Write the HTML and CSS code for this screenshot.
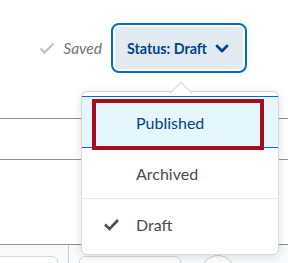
FILE: index.html
```html
<!DOCTYPE html>
<html lang="en">
<head>
  <meta charset="UTF-8">
  <title>Status</title>
  <link rel="stylesheet" href="styles.css">
</head>
<body>
  <header class="topbar">
    <span class="saved">
      <svg width="16" height="12" viewBox="0 0 16 12"><path d="M1.5 6.5 L5.5 10.5 L14.5 1.5" fill="none" stroke="#b8bfc4" stroke-width="2"/></svg>
      <span>Saved</span>
    </span>
    <button class="status-btn">
      <span>Status: Draft</span>
      <svg width="14" height="9" viewBox="0 0 14 9"><path d="M2 2 L7 7 L12 2" fill="none" stroke="#004489" stroke-width="2.8" stroke-linecap="round" stroke-linejoin="round"/></svg>
    </button>
  </header>

  <main class="content">
    <div class="field-row"></div>
    <div class="field-row tall"></div>
    <div class="tray">
      <div class="tray-box first"></div>
      <div class="tray-sep"></div>
      <div class="tray-box second"></div>
      <div class="tray-circle"></div>
    </div>
  </main>

  <div class="menu">
    <div class="menu-arrow"></div>
    <ul class="menu-list">
      <li class="menu-item active"><span class="slot"></span>Published</li>
      <li class="menu-item"><span class="slot"></span>Archived</li>
      <li class="menu-item"><span class="slot">
        <svg width="17" height="13" viewBox="0 0 17 13"><path d="M2 6.5 L6.5 11 L15 2" fill="none" stroke="#494c4e" stroke-width="2.6"/></svg>
      </span>Draft</li>
    </ul>
  </div>

  <div class="highlight"></div>
</body>
</html>
```

FILE: styles.css
```css
html {
  overflow: hidden;
}

body {
  margin: 0;
  background-color: #ffffff;
  font-family: Lato, 'Noto Sans', sans-serif;
  color: #494c4e;
  width: 288px;
  height: 263px;
  overflow: hidden;
}

.topbar {
  display: flex;
  justify-content: flex-end;
  align-items: center;
  padding: 23px 41px 0 0;
  height: 50px;
}

.saved {
  display: flex;
  align-items: center;
  gap: 8px;
  margin-right: 9px;
  font-size: 15.5px;
  font-style: italic;
  color: #6e7477;
}

.status-btn {
  display: flex;
  align-items: center;
  gap: 8px;
  height: 50px;
  padding: 0 16px 0 14px;
  background-color: #e3e9f1;
  border: 2px solid #006fbf;
  border-radius: 8px;
  box-shadow: inset 0 0 0 2px #ffffff;
  font-family: Lato, sans-serif;
  font-size: 14.3px;
  font-weight: bold;
  color: #004489;
}

.content {
  margin-top: 45px;
}

.field-row {
  border-top: 1px solid #8e9396;
  height: 40px;
}

.field-row.tall {
  height: 84px;
}

.tray {
  display: flex;
  align-items: flex-start;
  border-top: 1px solid #8e9396;
  background-color: #f9fafb;
  height: 18px;
  overflow: hidden;
}

.tray-box {
  margin-top: 11px;
  height: 20px;
  border: 1px solid #d3d9de;
  border-radius: 6px;
  background-color: #ffffff;
}

.tray-box.first {
  width: 64px;
  margin-left: -8px;
}

.tray-sep {
  width: 1px;
  height: 20px;
  margin-left: 10px;
  background-color: #c9ced2;
}

.tray-box.second {
  width: 100px;
  margin-left: 10px;
}

.tray-circle {
  width: 32px;
  height: 32px;
  margin: 10px 0 0 20px;
  border: 1px solid #c9ced2;
  border-radius: 50%;
  background-color: #ffffff;
}

.menu {
  position: absolute;
  left: 81px;
  top: 91px;
  width: 196px;
  height: 162px;
  background-color: #ffffff;
  border: 1px solid #d3d9de;
  border-radius: 6px;
  box-shadow: 0 2px 10px rgba(0, 0, 0, 0.12);
}

.menu-arrow {
  position: absolute;
  left: 91px;
  top: -7px;
  width: 15px;
  height: 15px;
  background-color: #ffffff;
  border-top: 1px solid #d3d9de;
  border-left: 1px solid #d3d9de;
  transform: rotate(45deg);
}

.menu-list {
  position: relative;
  list-style: none;
  margin: 0;
  padding: 4px 0;
}

.menu-item {
  display: flex;
  align-items: center;
  height: 50px;
  font-size: 16px;
  border-bottom: 1px solid #e3e9f1;
}

.menu-item:last-child {
  border-bottom: none;
}

.menu-item.active {
  background-color: #e6f6fd;
  color: #004489;
  border-top: 1px solid #006fbf;
  border-bottom: 1px solid #006fbf;
}

.slot {
  display: flex;
  align-items: center;
  width: 33px;
  padding-left: 21px;
}

.highlight {
  position: absolute;
  left: 92px;
  top: 99px;
  width: 164px;
  height: 43px;
  border: 4px solid #a50c1f;
}
```
